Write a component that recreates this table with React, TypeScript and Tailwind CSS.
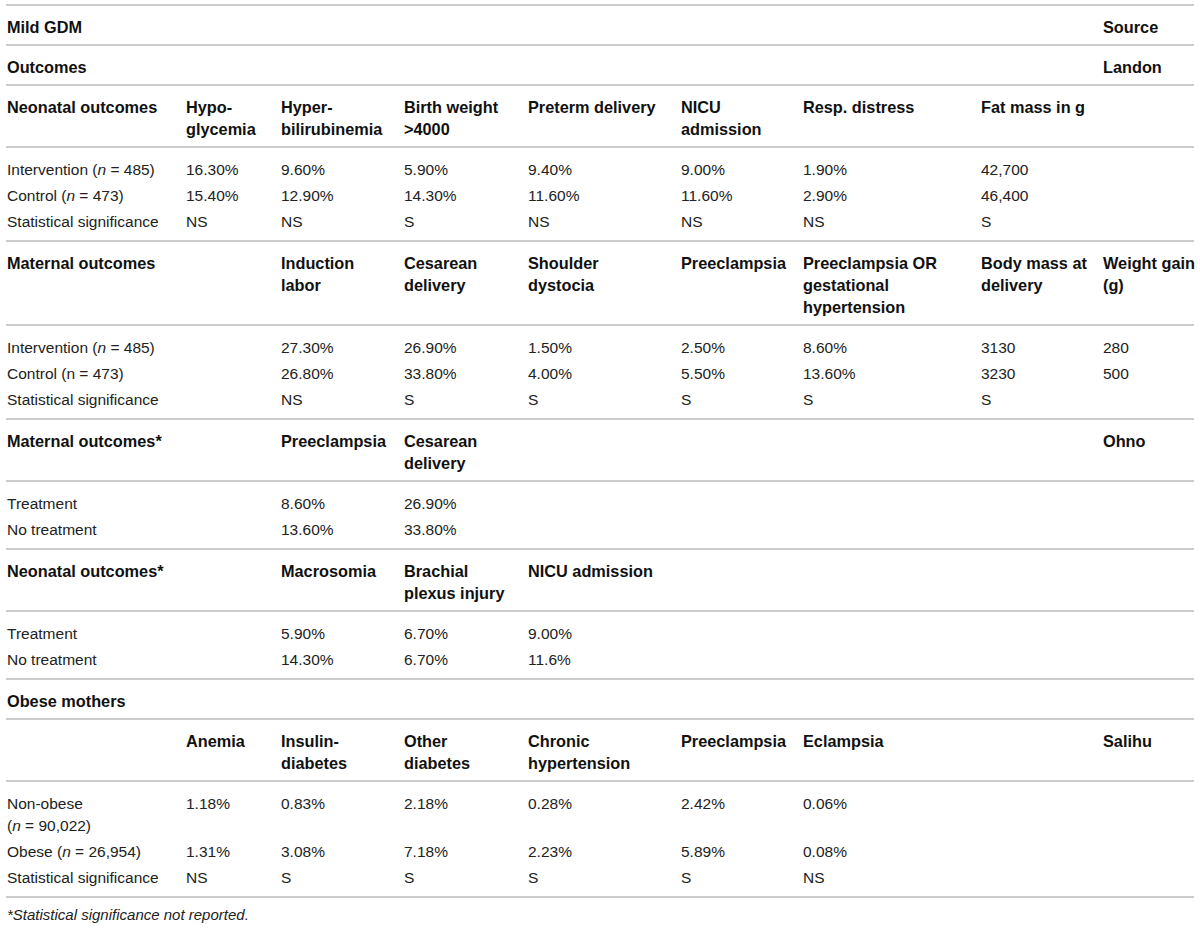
import type { ReactNode } from "react";

type Row = ReactNode[];
type Section = { head: Row; rows?: Row[] };

// column starts: 6, 185, 280, 403, 527, 680, 802, 980, 1102
const colWidths = ["w-[179px]", "w-[95px]", "w-[123px]", "w-[124px]", "w-[153px]", "w-[122px]", "w-[178px]", "w-[122px]", "w-[92px]"];

const N = () => <i>n</i>;

const sections: Section[] = [
	{ head: ["Mild GDM", "", "", "", "", "", "", "", "Source"] },
	{ head: ["Outcomes", "", "", "", "", "", "", "", "Landon"] },
	{
		head: [
			"Neonatal outcomes",
			<>Hypo-<br />glycemia</>,
			<>Hyper-<br />bilirubinemia</>,
			<>Birth weight<br />&gt;4000</>,
			"Preterm delivery",
			<>NICU<br />admission</>,
			"Resp. distress",
			"Fat mass in g",
			"",
		],
		rows: [
			[<>Intervention (<N /> = 485)</>, "16.30%", "9.60%", "5.90%", "9.40%", "9.00%", "1.90%", "42,700", ""],
			[<>Control (<N /> = 473)</>, "15.40%", "12.90%", "14.30%", "11.60%", "11.60%", "2.90%", "46,400", ""],
			["Statistical significance", "NS", "NS", "S", "NS", "NS", "NS", "S", ""],
		],
	},
	{
		head: [
			"Maternal outcomes",
			"",
			<>Induction<br />labor</>,
			<>Cesarean<br />delivery</>,
			<>Shoulder<br />dystocia</>,
			"Preeclampsia",
			<>Preeclampsia OR<br />gestational<br />hypertension</>,
			<>Body mass at<br />delivery</>,
			<>Weight gain<br />(g)</>,
		],
		rows: [
			[<>Intervention (<N /> = 485)</>, "", "27.30%", "26.90%", "1.50%", "2.50%", "8.60%", "3130", "280"],
			["Control (n = 473)", "", "26.80%", "33.80%", "4.00%", "5.50%", "13.60%", "3230", "500"],
			["Statistical significance", "", "NS", "S", "S", "S", "S", "S", ""],
		],
	},
	{
		head: ["Maternal outcomes*", "", "Preeclampsia", <>Cesarean<br />delivery</>, "", "", "", "", "Ohno"],
		rows: [
			["Treatment", "", "8.60%", "26.90%", "", "", "", "", ""],
			["No treatment", "", "13.60%", "33.80%", "", "", "", "", ""],
		],
	},
	{
		head: ["Neonatal outcomes*", "", "Macrosomia", <>Brachial<br />plexus injury</>, "NICU admission", "", "", "", ""],
		rows: [
			["Treatment", "", "5.90%", "6.70%", "9.00%", "", "", "", ""],
			["No treatment", "", "14.30%", "6.70%", "11.6%", "", "", "", ""],
		],
	},
	{ head: ["Obese mothers", "", "", "", "", "", "", "", ""] },
	{
		head: [
			"",
			"Anemia",
			<>Insulin-<br />diabetes</>,
			<>Other<br />diabetes</>,
			<>Chronic<br />hypertension</>,
			"Preeclampsia",
			"Eclampsia",
			"",
			"Salihu",
		],
		rows: [
			[<>Non-obese<br />(<N /> = 90,022)</>, "1.18%", "0.83%", "2.18%", "0.28%", "2.42%", "0.06%", "", ""],
			[<>Obese (<N /> = 26,954)</>, "1.31%", "3.08%", "7.18%", "2.23%", "5.89%", "0.08%", "", ""],
			["Statistical significance", "NS", "S", "S", "S", "S", "NS", "", ""],
		],
	},
];

export default function App() {
	return (
		<div className="w-[1200px] h-[928px] bg-white pt-[4px] font-['Liberation_Sans',Arial,sans-serif] text-[#222]">
			<table className="ml-[6px] w-[1188px] table-fixed border-t-2 border-[#cccccc]">
				<colgroup>
					{colWidths.map((w, i) => (
						<col key={i} className={w} />
					))}
				</colgroup>
				<tbody>
					{sections.map((s, si) => {
						const rows = s.rows ?? [];
						return [
							<tr key={`h${si}`}>
								{s.head.map((c, ci) => (
									<td
										key={ci}
										className="align-top whitespace-nowrap pl-[1px] pt-[10px] pb-[6px] text-[16.3px] leading-[22px] font-bold text-[#111] border-b-2 border-[#cccccc]"
									>
										{c}
									</td>
								))}
							</tr>,
							...rows.map((r, ri) => {
								const first = ri === 0;
								const last = ri === rows.length - 1;
								return (
									<tr key={`r${si}-${ri}`}>
										{r.map((c, ci) => (
											<td
												key={ci}
												className={`align-top whitespace-nowrap pl-[1px] text-[15.5px] leading-[22px] ${
													first ? "pt-[11px]" : "pt-[2px]"
												} ${last ? "pb-[7px] border-b-2 border-[#cccccc]" : "pb-[2px]"}`}
											>
												{c}
											</td>
										))}
									</tr>
								);
							}),
						];
					})}
				</tbody>
			</table>
			<p className="ml-[7px] mt-[6px] text-[15px] leading-[22px] italic">*Statistical significance not reported.</p>
		</div>
	);
}
